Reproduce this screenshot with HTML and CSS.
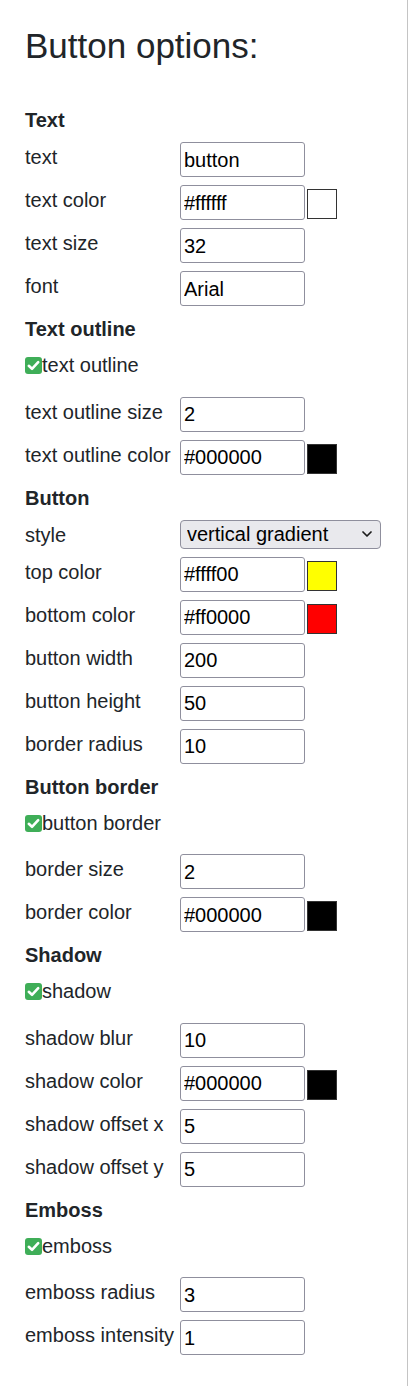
FILE: index.html
```html
<!DOCTYPE html>
<html lang="en">
<head>
<meta charset="utf-8">
<title>Button options</title>
<link rel="stylesheet" href="styles.css">
</head>
<body>
<div class="panel">
  <h1 class="title">Button options:</h1>
  <div class="form">
    <div class="section">Text</div>
    <div class="label">text</div>
    <div class="ctrl"><input class="field" type="text" value="button"></div>
    <div class="label">text color</div>
    <div class="ctrl"><input class="field" type="text" value="#ffffff"><span class="swatch" style="background:#ffffff"></span></div>
    <div class="label">text size</div>
    <div class="ctrl"><input class="field" type="text" value="32"></div>
    <div class="label">font</div>
    <div class="ctrl"><input class="field" type="text" value="Arial"></div>

    <div class="section">Text outline</div>
    <div class="check"><svg class="tick" viewBox="0 0 17 17" width="17" height="17"><rect x="0" y="0" width="17" height="17" rx="3" fill="#3fae58"/><path d="M3.8 8.8 L7 11.8 L13.2 5.2" fill="none" stroke="#fff" stroke-width="2.6" stroke-linecap="round" stroke-linejoin="round"/></svg>text outline</div>
    <div class="label">text outline size</div>
    <div class="ctrl"><input class="field" type="text" value="2"></div>
    <div class="label">text outline color</div>
    <div class="ctrl"><input class="field" type="text" value="#000000"><span class="swatch" style="background:#000000"></span></div>

    <div class="section">Button</div>
    <div class="label">style</div>
    <div class="ctrl"><div class="select-wrap"><select class="select"><option>vertical gradient</option></select><svg class="chev" viewBox="0 0 10 6" width="10" height="6"><path d="M1 1 L5 5 L9 1" fill="none" stroke="#1b1b1b" stroke-width="1.7" stroke-linecap="round" stroke-linejoin="round"/></svg></div></div>
    <div class="label">top color</div>
    <div class="ctrl"><input class="field" type="text" value="#ffff00"><span class="swatch" style="background:#ffff00"></span></div>
    <div class="label">bottom color</div>
    <div class="ctrl"><input class="field" type="text" value="#ff0000"><span class="swatch" style="background:#ff0000"></span></div>
    <div class="label">button width</div>
    <div class="ctrl"><input class="field" type="text" value="200"></div>
    <div class="label">button height</div>
    <div class="ctrl"><input class="field" type="text" value="50"></div>
    <div class="label">border radius</div>
    <div class="ctrl"><input class="field" type="text" value="10"></div>

    <div class="section">Button border</div>
    <div class="check"><svg class="tick" viewBox="0 0 17 17" width="17" height="17"><rect x="0" y="0" width="17" height="17" rx="3" fill="#3fae58"/><path d="M3.8 8.8 L7 11.8 L13.2 5.2" fill="none" stroke="#fff" stroke-width="2.6" stroke-linecap="round" stroke-linejoin="round"/></svg>button border</div>
    <div class="label">border size</div>
    <div class="ctrl"><input class="field" type="text" value="2"></div>
    <div class="label">border color</div>
    <div class="ctrl"><input class="field" type="text" value="#000000"><span class="swatch" style="background:#000000"></span></div>

    <div class="section">Shadow</div>
    <div class="check"><svg class="tick" viewBox="0 0 17 17" width="17" height="17"><rect x="0" y="0" width="17" height="17" rx="3" fill="#3fae58"/><path d="M3.8 8.8 L7 11.8 L13.2 5.2" fill="none" stroke="#fff" stroke-width="2.6" stroke-linecap="round" stroke-linejoin="round"/></svg>shadow</div>
    <div class="label">shadow blur</div>
    <div class="ctrl"><input class="field" type="text" value="10"></div>
    <div class="label">shadow color</div>
    <div class="ctrl"><input class="field" type="text" value="#000000"><span class="swatch" style="background:#000000"></span></div>
    <div class="label">shadow offset x</div>
    <div class="ctrl"><input class="field" type="text" value="5"></div>
    <div class="label">shadow offset y</div>
    <div class="ctrl"><input class="field" type="text" value="5"></div>

    <div class="section">Emboss</div>
    <div class="check"><svg class="tick" viewBox="0 0 17 17" width="17" height="17"><rect x="0" y="0" width="17" height="17" rx="3" fill="#3fae58"/><path d="M3.8 8.8 L7 11.8 L13.2 5.2" fill="none" stroke="#fff" stroke-width="2.6" stroke-linecap="round" stroke-linejoin="round"/></svg>emboss</div>
    <div class="label">emboss radius</div>
    <div class="ctrl"><input class="field" type="text" value="3"></div>
    <div class="label">emboss intensity</div>
    <div class="ctrl"><input class="field" type="text" value="1"></div>
  </div>
</div>
</body>
</html>
```

FILE: styles.css
```css
html, body {
  margin: 0;
  padding: 0;
  background: #fff;
}

body {
  font-family: "Liberation Sans", Arial, sans-serif;
  color: #212529;
  font-size: 20px;
}

.panel {
  box-sizing: border-box;
  width: 408px;
  min-height: 100vh;
  border-right: 1px solid #c4c4c4;
  padding: 25px 0 0 25px;
}

.title {
  font-size: 35px;
  font-weight: 400;
  line-height: 42px;
  margin: 0 0 38px;
  color: #212529;
}

.form {
  display: grid;
  grid-template-columns: 155px max-content;
  row-gap: 8px;
  align-items: start;
}

.section {
  grid-column: 1 / -1;
  font-weight: 700;
  line-height: 28px;
  padding-top: 1px;
}

.label {
  line-height: 28px;
  padding-top: 1px;
  white-space: nowrap;
}

.check {
  grid-column: 1 / -1;
  line-height: 29px;
  padding-bottom: 8.5px;
}

.tick {
  vertical-align: -2px;
}

.ctrl {
  display: flex;
  align-items: flex-start;
}

.field {
  box-sizing: border-box;
  width: 125px;
  height: 35px;
  margin: 0;
  padding: 1px 3px 0;
  border: 1px solid #8f8f9d;
  border-radius: 3px;
  background: #fff;
  color: #000;
  font-family: "Liberation Sans", Arial, sans-serif;
  font-size: 20px;
}

.swatch {
  box-sizing: border-box;
  width: 30px;
  height: 30px;
  margin: 4px 0 0 2px;
  border: 1px solid #333;
}

.select-wrap {
  position: relative;
}

.select {
  box-sizing: border-box;
  width: 201px;
  height: 29px;
  margin: 0;
  padding: 0 6px;
  border: 1px solid #8f8f9d;
  border-radius: 4px;
  background: #e9e9ed;
  color: #000;
  font-family: "Liberation Sans", Arial, sans-serif;
  font-size: 20px;
  -webkit-appearance: none;
  appearance: none;
}

.chev {
  position: absolute;
  right: 9px;
  top: 11px;
  pointer-events: none;
}
```
